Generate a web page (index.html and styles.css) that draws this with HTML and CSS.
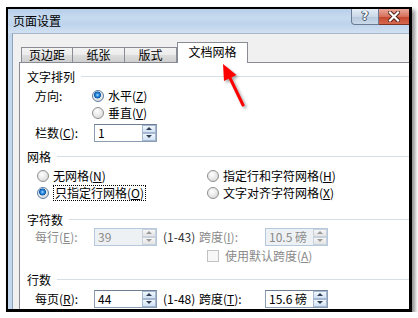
FILE: index.html
```html
<!DOCTYPE html>
<html lang="zh-CN">
<head>
    <meta charset="UTF-8">
    <title>页面设置</title>
    <link rel="stylesheet" href="styles.css">
</head>
<body>
    <div class="shot">
        <div class="titlebar">
            <span class="title">页面设置</span>
            <div class="caption">
                <span class="cap-help">?</span>
                <span class="cap-close">
                    <svg width="12" height="11" viewBox="0 0 12 11">
                        <path d="M2 1.5 L10 9.5 M10 1.5 L2 9.5" stroke="#4a1e16" stroke-width="4" stroke-linecap="square"/>
                        <path d="M2 1.5 L10 9.5 M10 1.5 L2 9.5" stroke="#fff" stroke-width="2.2" stroke-linecap="square"/>
                    </svg>
                </span>
            </div>
        </div>

        <div class="main">
            <div class="edge"></div>
            <div class="client">
                <div class="tabs">
                    <div class="tab t1">页边距</div>
                    <div class="tab t2">纸张</div>
                    <div class="tab t3">版式</div>
                    <div class="tab active">文档网格</div>
                </div>

                <div class="panel">
                    <div class="group">
                        <div class="ghead"><span>文字排列</span><i class="rule"></i></div>
                        <div class="row">
                            <span class="lbl">方向:</span>
                            <span class="radio on"></span>水平(<u>Z</u>)
                        </div>
                        <div class="row tight">
                            <span class="lbl"></span>
                            <span class="radio"></span>垂直(<u>V</u>)
                        </div>
                        <div class="row loose">
                            <span class="lbl">栏数(<u>C</u>):</span>
                            <div class="spin">
                                <span class="val">1</span>
                                <span class="arrows"><b class="up"></b><b class="down"></b></span>
                            </div>
                        </div>
                    </div>

                    <div class="group">
                        <div class="ghead"><span>网格</span><i class="rule"></i></div>
                        <div class="row opts">
                            <span class="opt"><span class="radio"></span>无网格(<u>N</u>)</span>
                            <span class="opt"><span class="radio"></span>指定行和字符网格(<u>H</u>)</span>
                        </div>
                        <div class="row opts tight">
                            <span class="opt"><span class="radio on"></span><span class="focus">只指定行网格(<u>O</u>)</span></span>
                            <span class="opt"><span class="radio"></span>文字对齐字符网格(<u>X</u>)</span>
                        </div>
                    </div>

                    <div class="group wide">
                        <div class="ghead"><span>字符数</span><i class="rule"></i></div>
                        <div class="row tight off">
                            <span class="lbl">每行(<u>E</u>):</span>
                            <div class="spin">
                                <span class="val">39</span>
                                <span class="arrows"><b class="up"></b><b class="down"></b></span>
                            </div>
                            <span class="range">(1-43)</span>
                            <span class="lbl2">跨度(<u>I</u>):</span>
                            <div class="spin">
                                <span class="val">10.5 磅</span>
                                <span class="arrows"><b class="up"></b><b class="down"></b></span>
                            </div>
                        </div>
                        <div class="row off">
                            <span class="check"></span>使用默认跨度(<u>A</u>)
                        </div>
                    </div>

                    <div class="group">
                        <div class="ghead"><span>行数</span><i class="rule"></i></div>
                        <div class="row">
                            <span class="lbl">每页(<u>R</u>):</span>
                            <div class="spin">
                                <span class="val">44</span>
                                <span class="arrows"><b class="up"></b><b class="down"></b></span>
                            </div>
                            <span class="range">(1-48)</span>
                            <span class="lbl2">跨度(<u>T</u>):</span>
                            <div class="spin">
                                <span class="val">15.6 磅</span>
                                <span class="arrows"><b class="up"></b><b class="down"></b></span>
                            </div>
                        </div>
                    </div>
                </div>
            </div>
        </div>

        <!-- red pointer drawn over the dialog -->
        <svg class="pointer" width="60" height="70" viewBox="0 0 60 70">
            <path d="M22 24 L35 51" stroke="#f00" stroke-width="3" stroke-linecap="round"/>
            <path d="M15 10 L28.5 21 L16 27 Z" fill="#f00"/>
        </svg>
    </div>
</body>
</html>
```

FILE: styles.css
```css
body {
    margin: 0;
    background-color: #fff;
    font-family: "Noto Sans CJK SC", sans-serif;
    font-size: 12px;
    color: #000;
}

.shot {
    position: relative;
    margin: 7px 0 0 6px;
    width: 401px;
    height: 300px;
    border: solid #000;
    border-width: 2px 3px 3px 2px;
    box-shadow: 3px 3px 4px rgba(0, 0, 0, 0.45);
    display: flex;
    flex-direction: column;
    overflow: hidden;
}

/* title bar */
.titlebar {
    height: 24px;
    display: flex;
    align-items: flex-start;
    background: linear-gradient(180deg, #b8cfe9 0%, #c6daef 35%, #bed4ec 65%, #d2e0f1 100%);
}

.title {
    line-height: 24px;
    padding-left: 5px;
}

.caption {
    margin-left: auto;
    display: flex;
}

.cap-help {
    width: 28px;
    height: 16px;
    box-sizing: border-box;
    border: 1px solid #6b7b91;
    border-top: none;
    border-radius: 0 0 0 4px;
    background: linear-gradient(180deg, #e5edf6 0%, #cbd8e8 50%, #b6c8dd 51%, #cad9ea 100%);
    color: #fff;
    font-family: "DejaVu Sans", sans-serif;
    font-weight: bold;
    font-size: 12px;
    line-height: 15px;
    text-align: center;
    text-shadow: 0 0 1px #2b3a4f, 1px 0 0 #4a5a70, -1px 0 0 #4a5a70, 0 1px 0 #4a5a70;
}

.cap-close {
    width: 30px;
    height: 16px;
    box-sizing: border-box;
    border-bottom: 1px solid #7a3427;
    background: linear-gradient(180deg, #eaa99b 0%, #d8705c 50%, #c3452d 51%, #d6684f 100%);
    display: flex;
    align-items: center;
    justify-content: center;
}

/* dialog body */
.main {
    flex: 1;
    display: flex;
}

.edge {
    width: 4px;
    background-color: #c3d8ee;
}

.client {
    flex: 1;
    display: flex;
    flex-direction: column;
    background-color: #f0f0f0;
    border-top: 1px solid #a6b7cc;
    border-left: 1px solid #8fa3bb;
    padding: 8px 0 0 6px;
}

.tabs {
    display: flex;
    align-items: flex-end;
    height: 21px;
    margin: 0 0 -1px 2px;
}

.tab {
    height: 15px;
    box-sizing: border-box;
    margin-bottom: 1px;
    border: 1px solid #898c95;
    border-bottom: none;
    background: linear-gradient(180deg, #f3f3f3 0%, #ebebeb 50%, #dddddd 51%, #cfcfcf 100%);
    display: flex;
    align-items: center;
    justify-content: center;
    line-height: 14px;
}

.tab + .tab {
    border-left: none;
}

.t1 { width: 52px; }
.t2 { width: 52px; }
.t3 { width: 52px; }

.tab.active {
    position: relative;
    z-index: 1;
    width: 71px;
    height: 21px;
    margin-bottom: 0;
    border-left: 1px solid #898c95;
    background: #fff;
    padding-bottom: 2px;
}

.panel {
    flex: 1;
    background-color: #fff;
    border-top: 1px solid #898c95;
    border-left: 1px solid #898c95;
    padding: 5px 0 0 7px;
}

/* groups */
.group + .group {
    margin-top: 7px;
}

.group.wide {
    margin-top: 10px;
}

.ghead {
    display: flex;
    align-items: center;
    height: 17px;
}

.rule {
    flex: 1;
    height: 1px;
    margin-left: 6px;
    background-color: #d5dfe5;
}

.row {
    display: flex;
    align-items: center;
    height: 17px;
    margin-top: 2px;
    padding-left: 8px;
    white-space: nowrap;
}

.row.tight { margin-top: 0; }
.row.loose { margin-top: 3px; }

.row.opts {
    padding-left: 10px;
}

.opt {
    display: flex;
    align-items: center;
    width: 170px;
}

.lbl {
    width: 57px;
    flex: none;
}

.lbl2 {
    width: 66px;
    flex: none;
}

.range {
    width: 36px;
    flex: none;
    margin-left: 6px;
}

.off .lbl,
.off .lbl2 {
    color: #8a8a8a;
}

.row.off {
    color: #8a8a8a;
}

.row.off .range {
    color: #333;
}

/* radio + checkbox */
.radio {
    width: 12px;
    height: 12px;
    box-sizing: border-box;
    border-radius: 50%;
    border: 1px solid #8e8f8f;
    background: radial-gradient(circle at 40% 35%, #fff 0, #e6e6e6 55%, #cfcfcf 100%);
    margin-right: 4px;
    flex: none;
}

.radio.on {
    border-color: #5b7da3;
    background:
        radial-gradient(circle at 45% 40%, #a9dcff 0, #2f8ee0 1.6px, #0d5bab 3.2px, rgba(13, 91, 171, 0) 3.8px),
        radial-gradient(circle at 40% 35%, #fff 0, #e6e6e6 55%, #cfcfcf 100%);
}

.focus {
    border: 1px dotted #000;
    padding: 0 1px;
    line-height: 14px;
}

.check {
    width: 12px;
    height: 12px;
    box-sizing: border-box;
    border: 1px solid #c2c2c2;
    background-color: #f7f7f7;
    margin: 0 6px 0 172px;
    flex: none;
}

/* spinners */
.spin {
    width: 63px;
    height: 18px;
    box-sizing: border-box;
    border: 1px solid #8b9db3;
    border-top-color: #6f7f94;
    background-color: #fff;
    display: flex;
    margin-left: 2px;
    flex: none;
}

.lbl2 + .spin {
    margin-left: 0;
}

.spin .val {
    flex: 1;
    padding-left: 3px;
    line-height: 16px;
    color: #000;
}

.arrows {
    width: 14px;
    display: flex;
    flex-direction: column;
}

.arrows b {
    flex: 1;
    box-sizing: border-box;
    border: 1px solid #a3b7d0;
    background: linear-gradient(180deg, #f1f6fc 0%, #d2e1f3 100%);
    display: flex;
    align-items: center;
    justify-content: center;
}

.arrows b::after {
    content: "";
    border-left: 3px solid transparent;
    border-right: 3px solid transparent;
}

.arrows .up::after { border-bottom: 3px solid #2d3e55; }
.arrows .down::after { border-top: 3px solid #2d3e55; }

.off .spin {
    border-color: #b4c9de;
    background-color: #eef1f4;
}

.off .spin .val {
    color: #8a8a8a;
}

.off .arrows b {
    border-color: #c9d2dc;
    background: linear-gradient(180deg, #f7f7f7 0%, #e4e4e4 100%);
}

.off .arrows .up::after { border-bottom-color: #9a9a9a; }
.off .arrows .down::after { border-top-color: #9a9a9a; }

.pointer {
    position: absolute;
    left: 200px;
    top: 45px;
    filter: drop-shadow(2px 2px 1.5px rgba(0, 0, 0, 0.35));
}
```
